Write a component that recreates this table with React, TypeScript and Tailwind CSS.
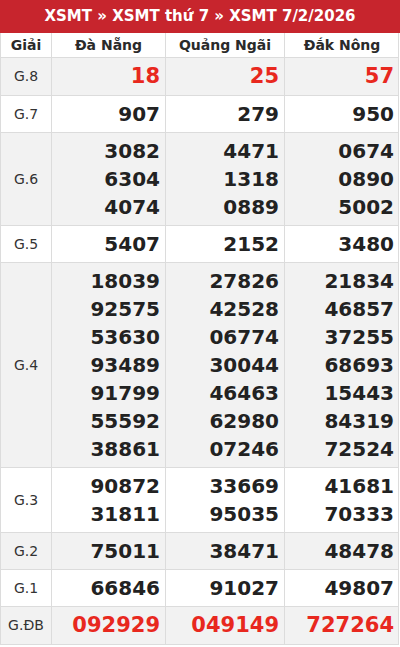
import React from "react";

type Row = { label: string; vals: string[][]; red?: boolean };

const rows: Row[] = [
  { label: "G.8", vals: [["18"], ["25"], ["57"]], red: true },
  { label: "G.7", vals: [["907"], ["279"], ["950"]] },
  { label: "G.6", vals: [["3082", "6304", "4074"], ["4471", "1318", "0889"], ["0674", "0890", "5002"]] },
  { label: "G.5", vals: [["5407"], ["2152"], ["3480"]] },
  {
    label: "G.4",
    vals: [
      ["18039", "92575", "53630", "93489", "91799", "55592", "38861"],
      ["27826", "42528", "06774", "30044", "46463", "62980", "07246"],
      ["21834", "46857", "37255", "68693", "15443", "84319", "72524"],
    ],
  },
  { label: "G.3", vals: [["90872", "31811"], ["33669", "95035"], ["41681", "70333"]] },
  { label: "G.2", vals: [["75011"], ["38471"], ["48478"]] },
  { label: "G.1", vals: [["66846"], ["91027"], ["49807"]] },
  { label: "G.ĐB", vals: [["092929"], ["049149"], ["727264"]], red: true },
];

export default function App() {
  return (
    <div className="w-[400px] bg-white" style={{ fontFamily: '"DejaVu Sans", sans-serif' }}>
      <div className="h-[33px] bg-[#c7252d] flex items-center justify-center text-white font-bold text-[15px]">
        XSMT » XSMT thứ 7 » XSMT 7/2/2026
      </div>
      <div className="w-[399px] border-l border-r border-b border-[#dcdcdc]">
        <div className="grid grid-cols-[51px_114px_119px_114px] h-[25px] border-b border-[#dcdcdc] text-[14px] font-bold text-[#2a2a2a]">
          <div className="flex items-center justify-center border-r border-[#dcdcdc]">Giải</div>
          <div className="flex items-center justify-center border-r border-[#dcdcdc]">Đà Nẵng</div>
          <div className="flex items-center justify-center border-r border-[#dcdcdc]">Quảng Ngãi</div>
          <div className="flex items-center justify-center">Đắk Nông</div>
        </div>
        {rows.map((r, i) => (
          <div
            key={r.label}
            className={
              "grid grid-cols-[51px_114px_119px_114px] " +
              (i < rows.length - 1 ? "border-b border-[#dcdcdc] " : "") +
              (i % 2 === 0 ? "bg-[#f2f2f2]" : "bg-white")
            }
          >
            <div className="flex items-center justify-center border-r border-[#dcdcdc] text-[14px] text-[#333]">
              {r.label}
            </div>
            {r.vals.map((col, j) => (
              <div
                key={j}
                className={
                  "flex flex-col items-end py-[4px] pr-[5px] font-bold " +
                  (j < 2 ? "border-r border-[#dcdcdc] " : "") +
                  (r.red ? "text-[21px] leading-[29px] text-[#e8281e]" : "text-[20px] leading-[28px] text-[#222]")
                }
              >
                {col.map((v) => (
                  <span key={v}>{v}</span>
                ))}
              </div>
            ))}
          </div>
        ))}
      </div>
    </div>
  );
}
